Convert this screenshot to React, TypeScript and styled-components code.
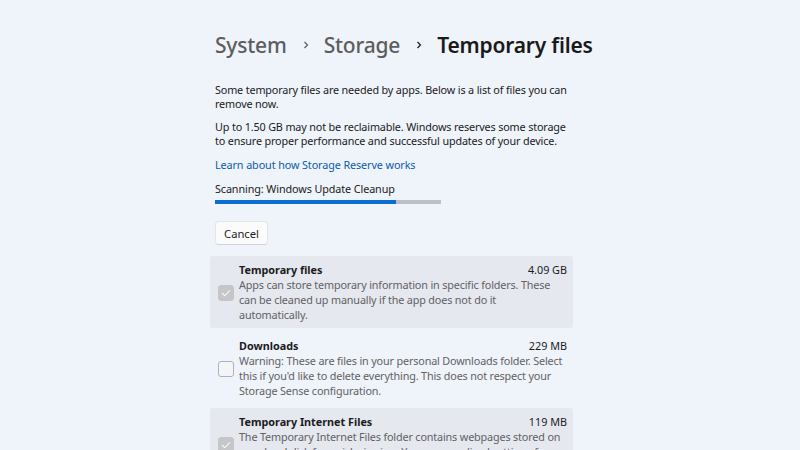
import styled, { createGlobalStyle } from "styled-components";

interface CleanupItem {
  name: string;
  size: string;
  description: string;
  checked: boolean;
  shaded: boolean;
}

const items: CleanupItem[] = [
  {
    name: "Temporary files",
    size: "4.09 GB",
    description:
      "Apps can store temporary information in specific folders. These can be cleaned up manually if the app does not do it automatically.",
    checked: true,
    shaded: true,
  },
  {
    name: "Downloads",
    size: "229 MB",
    description:
      "Warning: These are files in your personal Downloads folder. Select this if you'd like to delete everything. This does not respect your Storage Sense configuration.",
    checked: false,
    shaded: false,
  },
  {
    name: "Temporary Internet Files",
    size: "119 MB",
    description:
      "The Temporary Internet Files folder contains webpages stored on your hard disk for quick viewing. Your personalized settings for webpages will be left intact.",
    checked: true,
    shaded: true,
  },
];

const GlobalStyle = createGlobalStyle`
  html, body {
    margin: 0;
    padding: 0;
    background: #eff3fa;
    overflow: hidden;
  }
  body {
    font-family: "Noto Sans", "Open Sans", sans-serif;
    color: #1b1b1b;
  }
`;

const Page = styled.div`
  width: 800px;
  height: 450px;
  overflow: hidden;
  display: flex;
  align-items: flex-start;
  padding-left: 215px;
  box-sizing: border-box;
`;

const Column = styled.div`
  width: 358px;
  display: flex;
  flex-direction: column;
  & > * {
    flex: none;
  }
`;

const Breadcrumb = styled.div`
  display: flex;
  align-items: center;
  white-space: nowrap;
  margin-top: 28px;
  height: 34px;
  font-size: 21px;
  letter-spacing: -0.2px;
`;

const Crumb = styled.span<{ $current?: boolean }>`
  color: ${(p) => (p.$current ? "#1a1a1a" : "#5d5d5d")};
  font-weight: ${(p) => (p.$current ? 600 : 500)};
`;

const Chevron = styled.span`
  display: inline-flex;
  margin: 0 14px 0 15px;
  color: #5d5d5d;
`;

const Paragraph = styled.p`
  margin: 0;
  font-size: 10.8px;
  line-height: 14px;
  letter-spacing: -0.15px;
  color: #1b1b1b;
`;

const Intro = styled(Paragraph)`
  margin-top: 21px;
`;

const Reserve = styled(Paragraph)`
  margin-top: 9px;
`;

const Link = styled.a`
  margin-top: 10px;
  font-size: 10.8px;
  line-height: 14px;
  letter-spacing: -0.1px;
  color: #0b5cad;
  text-decoration: none;
`;

const Status = styled.div`
  margin-top: 10px;
  font-size: 10.8px;
  line-height: 14px;
  letter-spacing: -0.1px;
  color: #1b1b1b;
`;

const Track = styled.div`
  margin-top: 4px;
  width: 226px;
  height: 4px;
  background: #bcbfc4;
`;

const Fill = styled.div`
  height: 100%;
  background: #0a6ed1;
`;

const CancelButton = styled.button`
  align-self: flex-start;
  margin-top: 17px;
  width: 53px;
  height: 24px;
  border: 1px solid #e3e5e8;
  border-bottom-color: #cfd2d6;
  border-radius: 4px;
  background: #fbfbfc;
  font-family: inherit;
  font-size: 11.2px;
  color: #1b1b1b;
  padding: 0;
`;

const List = styled.div`
  margin-top: 11px;
  margin-left: -5px;
  width: 363px;
  display: flex;
  flex-direction: column;
  gap: 4px;
`;

const Row = styled.div<{ $shaded: boolean }>`
  display: flex;
  align-items: center;
  gap: 5px;
  padding: 6px 6px 6px 8px;
  min-height: 60px;
  border-radius: 3px;
  background: ${(p) => (p.$shaded ? "#e5e8ef" : "transparent")};
`;

const Box = styled.div<{ $checked: boolean }>`
  flex: none;
  width: 16px;
  height: 16px;
  border-radius: 3px;
  box-sizing: border-box;
  margin-top: 2px;
  display: flex;
  align-items: center;
  justify-content: center;
  background: ${(p) => (p.$checked ? "#c4c6ca" : "#f4f5f7")};
  border: 1px solid ${(p) => (p.$checked ? "#c4c6ca" : "#aeb1b6")};
`;

const Body = styled.div`
  flex: 1;
  display: flex;
  flex-direction: column;
`;

const Head = styled.div`
  display: flex;
  justify-content: space-between;
  font-size: 10.8px;
  line-height: 15px;
`;

const Name = styled.span`
  font-weight: 700;
  color: #1b1b1b;
`;

const Size = styled.span`
  color: #1b1b1b;
`;

const Desc = styled.div`
  font-size: 10.8px;
  line-height: 15px;
  letter-spacing: -0.15px;
  color: #626262;
`;

export default function App() {
  return (
    <>
      <GlobalStyle />
      <Page>
        <Column>
          <Breadcrumb>
            <Crumb>System</Crumb>
            <Chevron>
              <svg width="8" height="10" viewBox="0 0 8 10">
                <path d="M2.5 2 L5.5 5 L2.5 8" fill="none" stroke="currentColor" strokeWidth="1.2" />
              </svg>
            </Chevron>
            <Crumb>Storage</Crumb>
            <Chevron>
              <svg width="8" height="10" viewBox="0 0 8 10">
                <path d="M2.5 2 L5.5 5 L2.5 8" fill="none" stroke="#1a1a1a" strokeWidth="1.2" />
              </svg>
            </Chevron>
            <Crumb $current>Temporary files</Crumb>
          </Breadcrumb>

          <Intro>
            Some temporary files are needed by apps. Below is a list of files you can remove now.
          </Intro>
          <Reserve>
            Up to 1.50 GB may not be reclaimable. Windows reserves some storage to ensure proper
            performance and successful updates of your device.
          </Reserve>
          <Link href="#">Learn about how Storage Reserve works</Link>

          <Status>Scanning: Windows Update Cleanup</Status>
          <Track>
            <Fill style={{ width: `${(181 / 226) * 100}%` }} />
          </Track>

          <CancelButton>Cancel</CancelButton>

          <List>
            {items.map((item, idx) => (
              <Row key={idx} $shaded={item.shaded}>
                <Box $checked={item.checked}>
                  {item.checked && (
                    <svg width="10" height="8" viewBox="0 0 10 8">
                      <path d="M1 4 L3.8 6.6 L9 1.4" fill="none" stroke="#f4f4f4" strokeWidth="1.2" />
                    </svg>
                  )}
                </Box>
                <Body>
                  <Head>
                    <Name>{item.name}</Name>
                    <Size>{item.size}</Size>
                  </Head>
                  <Desc>{item.description}</Desc>
                </Body>
              </Row>
            ))}
          </List>
        </Column>
      </Page>
    </>
  );
}
